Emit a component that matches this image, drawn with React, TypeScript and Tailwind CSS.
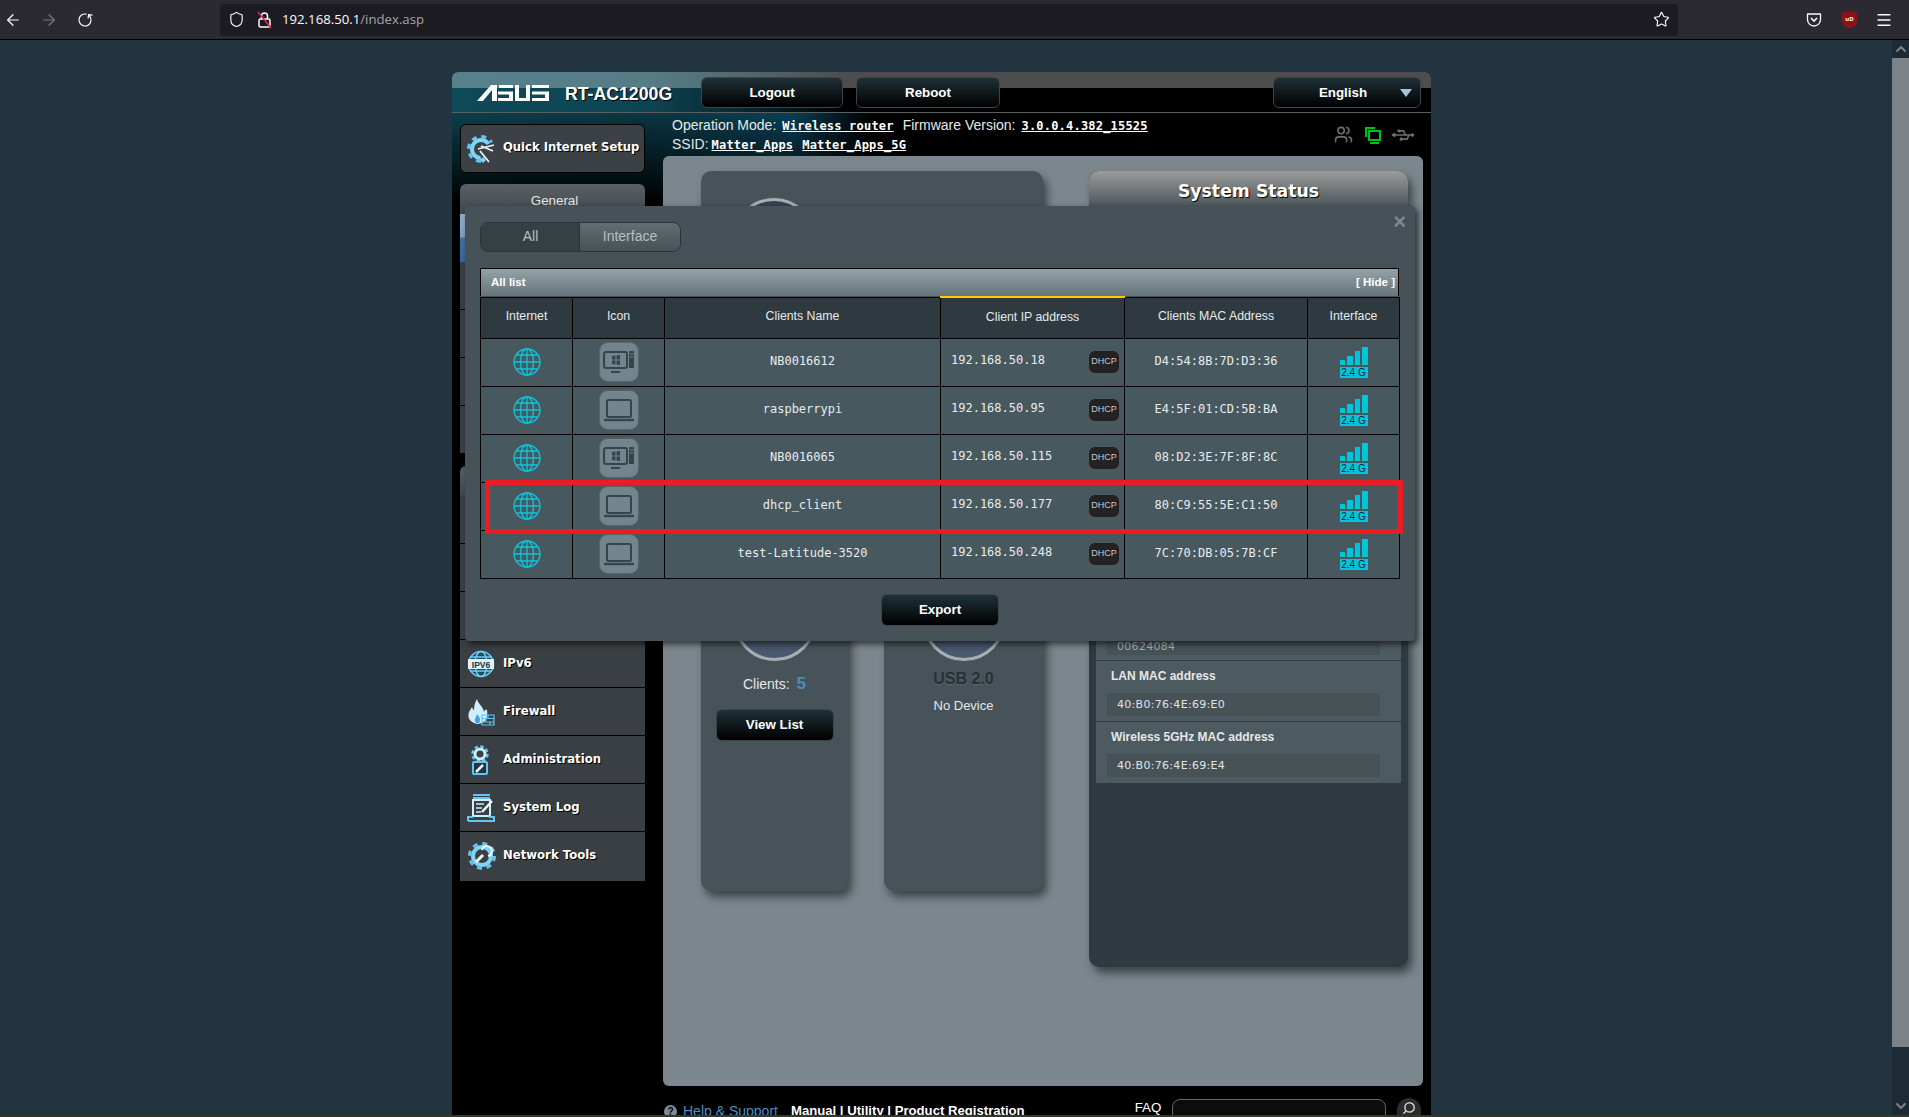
import { ArrowLeft, ArrowRight, ChevronDown, ChevronUp, Menu, RotateCw, Search, Shield, Star, Usb, Users } from "lucide-react"

const mono = "font-['DejaVu_Sans_Mono',monospace]"
const sideFont = "font-['DejaVu_Sans',sans-serif]"

const clients = [
  { name: "NB0016612", ip: "192.168.50.18", mac: "D4:54:8B:7D:D3:36", desktop: true },
  { name: "raspberrypi", ip: "192.168.50.95", mac: "E4:5F:01:CD:5B:BA", desktop: false },
  { name: "NB0016065", ip: "192.168.50.115", mac: "08:D2:3E:7F:8F:8C", desktop: true },
  { name: "dhcp_client", ip: "192.168.50.177", mac: "80:C9:55:5E:C1:50", desktop: false },
  { name: "test-Latitude-3520", ip: "192.168.50.248", mac: "7C:70:DB:05:7B:CF", desktop: false },
]

function AsusLogo() {
  return (
    <svg width="72" height="16" viewBox="0 0 72 16" fill="#fff">
      <path d="M0 16 L14 0 H20 L20 16 H15 V5 L6 16 Z" />
      <path d="M22 0 H36 V3 H22 Z M21 6.5 H36 V16 H21 V13 H32 V9.5 H21 Z" />
      <path d="M38 0 H42 V13 H49 V0 H53 V16 H38 Z" />
      <path d="M55 0 H72 V3 H55 Z M55 6.5 H72 V16 H55 V13 H68 V9.5 H55 Z" />
    </svg>
  )
}

function Gear({ children }: { children?: React.ReactNode }) {
  return (
    <svg width="30" height="30" viewBox="0 0 30 30" fill="none">
      <circle cx="15" cy="15" r="12.5" stroke="#62c6f0" strokeWidth="3" strokeDasharray="5 4.8" />
      <circle cx="15" cy="15" r="9" stroke="#7fd3f5" strokeWidth="4" />
      {children}
    </svg>
  )
}

function SetupIcon() {
  return (
    <Gear>
      <path d="M13 15 L30 6 V30 H16 Z" fill="#3b4144" />
      <path d="M12 15 L28 11 M15 12 L27 17 M14 17 L23 28" stroke="#e8f6fc" strokeWidth="1.8" />
      <path d="M17 23 L20 26 L17 29 L14 26 Z" fill="#7fd3f5" />
    </Gear>
  )
}

function Ipv6Icon() {
  return (
    <svg width="28" height="28" viewBox="0 0 28 28" fill="none" stroke="#6fcdf3" strokeWidth="1.5">
      <circle cx="14" cy="14" r="12.5" fill="#1f4a60" />
      <ellipse cx="14" cy="14" rx="6" ry="12.5" />
      <path d="M3 7 H25 M3 21 H25" />
      <rect x="1" y="9" width="26" height="10" fill="#dff3fb" stroke="none" />
      <text x="14" y="17.5" textAnchor="middle" fontSize="8.5" fontWeight="700" fill="#234" stroke="none" fontFamily="Liberation Sans">IPV6</text>
    </svg>
  )
}

function FirewallIcon() {
  return (
    <svg width="28" height="28" viewBox="0 0 28 28" fill="none">
      <path d="M10 1 C11 6 16 8 17 14 C18 11 19 11 20 12 C21 18 20 25 11 26 C3 25 0 20 2 14 C3 12 4 11 5 9 C6 11 6 12 7 12 C7 8 8 4 10 1 Z" fill="#cfeefb" />
      <path d="M9 25 C6 21 10 19 10 16 C13 19 14 22 12 25 Z" fill="#3ca6dc" />
      <path d="M15 17 H27 V27 H15 Z M15 20.5 H27 M15 24 H27 M21 17 V20.5 M19 20.5 V24 M23 24 V27" stroke="#62c6f0" strokeWidth="1.2" />
    </svg>
  )
}

function AdminIcon() {
  return (
    <svg width="26" height="30" viewBox="0 0 26 30" fill="none">
      <circle cx="13" cy="9" r="7.5" stroke="#62c6f0" strokeWidth="2.5" strokeDasharray="3.5 2.4" />
      <circle cx="13" cy="9" r="5" stroke="#cbeefb" strokeWidth="3" />
      <rect x="6" y="17" width="14" height="12" rx="1" stroke="#62c6f0" strokeWidth="2" fill="#1f3640" />
      <path d="M9 27 L16 20" stroke="#e8f6fc" strokeWidth="2.5" />
    </svg>
  )
}

function LogIcon() {
  return (
    <svg width="28" height="28" viewBox="0 0 28 28" fill="none">
      <path d="M6 1 H23 M6 4 H23" stroke="#62c6f0" strokeWidth="2" />
      <rect x="6" y="6" width="17" height="16" stroke="#cbeefb" strokeWidth="2" />
      <path d="M9 10 H17 M9 14 H15 M9 18 H14" stroke="#cbeefb" strokeWidth="1.6" />
      <path d="M15 18 L25 7" stroke="#f0fafe" strokeWidth="2.5" />
      <path d="M1 27 H27 V23 H22 M1 27 V23 H6" stroke="#62c6f0" strokeWidth="2" />
    </svg>
  )
}

function ToolsIcon() {
  return (
    <Gear>
      <path d="M9 21 L16 14" stroke="#f0fafe" strokeWidth="3" />
      <path d="M15 9 A5 5 0 1 1 21 15" stroke="#f0fafe" strokeWidth="2" />
    </Gear>
  )
}

function Globe() {
  return (
    <svg width="28" height="28" viewBox="0 0 28 28" fill="none" stroke="#10c4dc" strokeWidth="1.3">
      <circle cx="14" cy="14" r="13" />
      <ellipse cx="14" cy="14" rx="6.5" ry="13" />
      <path d="M14 1 V27 M1 14 H27 M3.5 7 H24.5 M3.5 21 H24.5" />
    </svg>
  )
}

function DeviceIcon({ desktop }: { desktop: boolean }) {
  return (
    <div className="flex h-[40px] w-[40px] items-center justify-center rounded-[9px] border border-[#56666d] bg-[#72848c]">
      {desktop ? (
        <svg width="32" height="24" viewBox="0 0 32 24" fill="none" stroke="#37444b" strokeWidth="2">
          <rect x="1" y="2" width="23" height="16" rx="2" />
          <path d="M8 22 H17" strokeWidth="2" />
          <rect x="26" y="1" width="5" height="17" fill="#37444b" stroke="none" />
          <path d="M26.5 4 H30.5 M26.5 7 H30.5" stroke="#72848c" strokeWidth="1" />
          <path d="M9 6 L17 5 V9.5 H9 Z M9 10.5 H17 V15 L9 14 Z" fill="#37444b" stroke="none" />
          <path d="M13 5 V15" stroke="#72848c" strokeWidth="1" />
        </svg>
      ) : (
        <svg width="32" height="24" viewBox="0 0 32 24" fill="none" stroke="#37444b" strokeWidth="2">
          <rect x="4" y="2" width="24" height="17" rx="1.5" />
          <path d="M1 22 H31" strokeWidth="2.4" />
        </svg>
      )}
    </div>
  )
}

function Signal() {
  return (
    <div className="flex w-[28px] flex-col gap-[2px]">
      <div className="flex h-[18px] items-end gap-[2px]">
        <div className="h-[5px] w-[5.5px] bg-[#00c6dc]" />
        <div className="h-[9px] w-[5.5px] bg-[#00c6dc]" />
        <div className="h-[14px] w-[5.5px] bg-[#00c6dc]" />
        <div className="h-[18px] w-[5.5px] bg-[#00c6dc]" />
      </div>
      <div className="h-[11px] whitespace-nowrap bg-[#00c6dc] text-center font-['Liberation_Sans',sans-serif] text-[10px] leading-[11px] text-[#06252c]">2.4 G</div>
    </div>
  )
}

function DarkButton({ label, className }: { label: string; className: string }) {
  return (
    <div className={`flex items-center justify-center rounded-[6px] border border-[#3b464c] bg-[linear-gradient(180deg,#1f3138_0%,#000_100%)] text-[13.33px] font-bold text-white ${className}`}>
      {label}
    </div>
  )
}

function SideRow({ icon, label }: { icon?: React.ReactNode; label?: string }) {
  return (
    <div className="flex h-[48px] items-center border-b border-black bg-[#3a3f43] pl-[7px] last:h-[50px] last:pb-[2px]">
      <div className="flex w-[36px] shrink-0 items-center justify-start">{icon}</div>
      <span className={`${sideFont} text-[11.7px] font-bold text-white [text-shadow:1px_1px_0_#000]`}>{label}</span>
    </div>
  )
}

function Ring() {
  return <div className="mx-auto h-[84px] w-[84px] rounded-full border-[3px] border-[#a7afb3] bg-[linear-gradient(180deg,#33404f_0%,#4a5b70_100%)]" />
}

function Browser() {
  return (
    <div className="flex h-[40px] shrink-0 items-center border-b border-black bg-[#2b2a33] text-[#fbfbfe]">
      <div className="flex w-[220px] items-center pl-[4px]">
        <ArrowLeft size={18} strokeWidth={1.6} />
        <ArrowRight size={18} strokeWidth={1.6} className="ml-[18px] text-[#77767c]" />
        <RotateCw size={16} strokeWidth={1.8} className="ml-[19px] -scale-x-100 rotate-[100deg]" />
      </div>
      <div className="flex h-[32px] w-[1458px] items-center rounded-[4px] bg-[#1c1b22] pr-[8px] font-['Open_Sans',sans-serif] text-[13.2px]">
        <Shield size={17} strokeWidth={1.6} className="ml-[8px]" />
        <svg width="16" height="18" viewBox="0 0 16 18" fill="none" stroke="#fbfbfe" strokeWidth="1.5" className="ml-[12px]">
          <rect x="2" y="8" width="11" height="8" rx="1.5" />
          <path d="M4.5 8 V5 A3 3 0 0 1 10.5 5 V8" />
          <path d="M1 1 L14 17" stroke="#e22850" />
        </svg>
        <span className="ml-[9px] pt-[1px]">192.168.50.1</span>
        <span className="pt-[1px] text-[#a5a4aa]">/index.asp</span>
        <Star size={17} strokeWidth={1.6} className="ml-auto" />
      </div>
      <div className="ml-auto flex items-center pr-[16px]">
        <svg width="16" height="16" viewBox="0 0 16 16" fill="none" stroke="#fbfbfe" strokeWidth="1.3">
          <path d="M1.5 2 H14.5 V7.5 A6.5 6.5 0 0 1 1.5 7.5 Z" strokeLinejoin="round" />
          <path d="M5 6 L8 9 L11 6" strokeWidth="1.6" />
        </svg>
        <div className="ml-[20px] flex h-[16px] w-[15px] items-center justify-center rounded-b-[7px] rounded-t-[2px] bg-[#8a1218] text-[6px] font-bold text-white">uD</div>
        <Menu size={18} strokeWidth={1.7} className="ml-[18px]" />
      </div>
    </div>
  )
}

function Scrollbar() {
  return (
    <div className="flex w-[17px] shrink-0 flex-col items-center bg-[#1e2b35] text-[#7b8389]">
      <ChevronUp size={16} strokeWidth={3} className="my-[1px]" />
      <div className="h-[989px] w-full bg-[#7b8389]" />
      <div className="flex-1" />
      <ChevronDown size={16} strokeWidth={3} className="mb-[1px]" />
    </div>
  )
}

function Header() {
  return (
    <div className="flex h-[41px] shrink-0 items-start border-b border-[#5a5f62] bg-[linear-gradient(180deg,rgba(255,255,255,0.3)_0,rgba(255,255,255,0.3)_16px,transparent_16px),linear-gradient(90deg,#0f4a58_0%,#0d4452_20%,#08262e_30%,#000_40%)] pl-[25px] pt-[5px]">
      <div className="mt-[8px]">
        <AsusLogo />
      </div>
      <div className="ml-[16px] mt-[4px] w-[136px] whitespace-nowrap text-[17.7px] font-bold text-white [text-shadow:1px_1px_0_#000]">RT-AC1200G</div>
      <DarkButton label="Logout" className="h-[31px] w-[142px]" />
      <DarkButton label="Reboot" className="ml-[13px] h-[31px] w-[144px]" />
      <div className="relative ml-[273px] flex h-[31px] w-[148px] items-center justify-center rounded-[6px] border border-[#3b464c] bg-[linear-gradient(180deg,#1f3138_0%,#000_100%)] pr-[8px] text-[13.33px] font-bold text-white">
        English
        <div className="absolute right-[8px] top-[11px] h-0 w-0 border-x-[6px] border-t-[8px] border-x-transparent border-t-[#a9c4d4]" />
      </div>
    </div>
  )
}

function Sidebar() {
  return (
    <div className="w-[185px] shrink-0 pt-[11px]">
      <div className="flex h-[49px] items-center rounded-[6px] border border-black bg-[#3b4144] pl-[5px]">
        <div className="w-[37px] shrink-0">
          <SetupIcon />
        </div>
        <span className={`${sideFont} whitespace-nowrap pb-[2px] text-[11.6px] font-bold text-white [text-shadow:1px_1px_0_#000]`}>Quick Internet Setup</span>
      </div>
      <div className="mt-[11px] flex h-[30px] items-center justify-center rounded-t-[6px] bg-[linear-gradient(180deg,#5a6164_0%,#41484b_100%)] pl-[4px] pt-[3px] text-[13.33px] text-[#e6e6e6]">
        General
      </div>
      <div className="h-[48px] bg-[linear-gradient(180deg,#93aec8_0%,#7f9fc0_48%,#41719f_50%,#38679a_100%)]" />
      <SideRow />
      <SideRow />
      <SideRow />
      <SideRow />
      <div className="mt-[12px] h-[30px] rounded-t-[6px] bg-[linear-gradient(180deg,#5a6164_0%,#41484b_100%)]" />
      <SideRow />
      <SideRow />
      <SideRow />
      <SideRow icon={<Ipv6Icon />} label="IPv6" />
      <SideRow icon={<FirewallIcon />} label="Firewall" />
      <SideRow icon={<AdminIcon />} label="Administration" />
      <SideRow icon={<LogIcon />} label="System Log" />
      <SideRow icon={<ToolsIcon />} label="Network Tools" />
    </div>
  )
}

function InfoBar() {
  const link = `${mono} text-[12px] font-bold text-white underline tracking-[0.2px]`
  return (
    <div className="flex h-[43px] shrink-0 justify-between pl-[9px] pr-[10px] text-[14px] text-[#e8e8e8]">
      <div className="pt-[3px] leading-[18px]">
        <div className="flex items-baseline gap-[6px]">
          <span>Operation Mode:</span>
          <span className={link}>Wireless router</span>
          <span className="ml-[3px]">Firmware Version:</span>
          <span className={link}>3.0.0.4.382_15525</span>
        </div>
        <div className="flex items-baseline gap-[3px]">
          <span>SSID:</span>
          <span className={link}>Matter_Apps</span>
          <span className={`${link} ml-[6px]`}>Matter_Apps_5G</span>
        </div>
      </div>
      <div className="flex items-center gap-[11px] py-[2px]">
        <Users size={19} className="text-[#6b6f72]" />
        <svg width="18" height="18" viewBox="0 0 18 18" fill="none" stroke="#00c020" strokeWidth="2">
          <path d="M11 2 H2 V11" />
          <rect x="5" y="5" width="11" height="9" />
          <path d="M6 17 H15" />
        </svg>
        <Usb size={20} className="rotate-[225deg] text-[#6b6f72]" />
      </div>
    </div>
  )
}

function StatusField({ label, value }: { label: string; value: string }) {
  return (
    <div className="mt-[5px] border-t border-[#2f3c43]">
      <div className="ml-[15px] pt-[8px] text-[12px] font-bold leading-[14px] text-[#e4e7e8]">{label}</div>
      <div className="ml-[11px] mr-[21px] mt-[10px] flex h-[23px] items-center bg-[#475257] pl-[10px] pt-[2px] font-['DejaVu_Sans',sans-serif] text-[11px] tracking-[0.3px] text-[#e0e3e4]">
        {value}
      </div>
    </div>
  )
}

function SystemStatus() {
  return (
    <div className="flex h-[796px] w-[319px] flex-col rounded-[10px] bg-[#2f3a40] shadow-[4px_6px_8px_rgba(0,0,0,0.5)]">
      <div className="flex h-[35px] shrink-0 items-center justify-center rounded-t-[10px] bg-[linear-gradient(180deg,#9b9b9b_0%,#4d575b_100%)] pt-[7px] font-['DejaVu_Sans',sans-serif] text-[17.3px] font-bold text-white [text-shadow:1px_1px_1px_#000]">
        System Status
      </div>
      <div className="mx-[7px] mt-[8px] flex h-[569px] flex-col justify-end bg-[#4d5a5f] pb-[6px]">
        <div className="ml-[11px] mr-[21px] flex h-[23px] items-center bg-[#475257] pl-[10px] pt-[8px] font-['DejaVu_Sans',sans-serif] text-[11px] tracking-[0.3px] text-[#aab2b5]">
          00624084
        </div>
        <StatusField label="LAN MAC address" value="40:B0:76:4E:69:E0" />
        <StatusField label="Wireless 5GHz MAC address" value="40:B0:76:4E:69:E4" />
      </div>
    </div>
  )
}

function Cards() {
  return (
    <div className="w-[342px] shrink-0">
      <div className="h-[230px] rounded-[10px] bg-[#475359] pt-[27px] shadow-[4px_6px_8px_rgba(0,0,0,0.5)]">
        <div className="ml-[31px] w-[84px]">
          <Ring />
        </div>
      </div>
      <div className="mt-[14px] flex gap-[36px]">
        <div className="h-[476px] w-[147px] rounded-[10px] bg-[#475359] pt-[162px] text-center shadow-[4px_6px_8px_rgba(0,0,0,0.5)]">
          <Ring />
          <div className="mt-[12px] flex items-center justify-center gap-[7px] text-[14px] leading-[22px] text-[#e4e7e8]">
            Clients:
            <span className="text-[17px] font-bold text-[#4a8dbd]">5</span>
          </div>
          <DarkButton label="View List" className="mx-auto mt-[14px] h-[32px] w-[118px]" />
        </div>
        <div className="h-[476px] w-[159px] rounded-[10px] bg-[#475359] pt-[162px] text-center shadow-[4px_6px_8px_rgba(0,0,0,0.5)]">
          <Ring />
          <div className="mt-[9px] text-[16px] font-bold leading-[18px] text-[#262f34] [text-shadow:0_1px_1px_#5c686e]">USB 2.0</div>
          <div className="mt-[10px] text-[13px] leading-[16px] text-[#e4e7e8]">No Device</div>
        </div>
      </div>
    </div>
  )
}

function Footer() {
  return (
    <div className="flex items-start pl-[1px] pt-[14px] text-[13.15px] leading-[20px]">
      <div className="mt-[5px] flex h-[13px] w-[13px] items-center justify-center rounded-full bg-[#7b8c94] text-[10px] font-bold text-black">?</div>
      <span className="ml-[6px] mt-[1px] text-[14px] text-[#4a90c0]">Help & Support</span>
      <span className="ml-[13px] mt-[1px] font-bold text-white">Manual | Utility | Product Registration</span>
      <span className="ml-[110px] mt-[-2px] text-[13.33px] text-white">FAQ</span>
      <div className="ml-[11px] mt-[-1px] h-[30px] w-[214px] rounded-[8px] border border-[#666] bg-[#0c0c0c]" />
      <div className="ml-[11px] mt-[-2px] flex h-[30px] w-[24px] items-start justify-center rounded-full bg-[#2c2c2c] pt-[3px]">
        <Search size={14} strokeWidth={2.6} className="-scale-x-100 text-[#c8ced1]" />
      </div>
    </div>
  )
}

function RouterPanel() {
  return (
    <div className="flex h-full w-[979px] flex-col overflow-hidden rounded-t-[6px] bg-black font-['Liberation_Sans',Arial,sans-serif]">
      <Header />
      <div className="flex flex-1 gap-[18px] bg-[linear-gradient(180deg,transparent_0,#000_90px),linear-gradient(90deg,#0b3f4c_0,#0a3541_200px,#0b3f55_340px,#000_420px)] pl-[8px]">
        <Sidebar />
        <div className="flex w-[760px] shrink-0 flex-col">
          <InfoBar />
          <div className="flex h-[930px] shrink-0 gap-[46px] rounded-[6px] bg-[#7b878d] pl-[38px] pt-[15px]">
            <Cards />
            <SystemStatus />
          </div>
          <Footer />
        </div>
      </div>
    </div>
  )
}

function ClientModal() {
  const th = "border border-black pb-[2px] text-center font-normal text-[#e5e9ea]"
  const td = "border border-black p-0 text-center"
  return (
    <div className="absolute left-[465px] top-[206px] h-[435px] w-[950px] rounded-[4px] bg-[#465158] pl-[15px] pt-[16px] font-['Liberation_Sans',Arial,sans-serif] shadow-[3px_3px_6px_rgba(0,0,0,0.6)]">
      <div className="absolute right-[9px] top-[6px] text-[22px] font-bold leading-[20px] text-[#7d8a90]">×</div>

      <div className="flex h-[30px] w-[201px] overflow-hidden rounded-[8px] border border-[#2b3338] text-[14px] text-[#b7bfc3]">
        <div className="flex w-[99px] items-center justify-center border-r border-[#2b3338] bg-[#363f44] pb-[1px] pl-[1px]">All</div>
        <div className="flex flex-1 items-center justify-center bg-[linear-gradient(180deg,#626d72_0%,#475257_100%)] pb-[1px]">Interface</div>
      </div>

      <div className="mt-[16px] flex h-[28px] w-[919px] items-center justify-between border border-b-0 border-black bg-[linear-gradient(180deg,#95a2a8_0%,#66757b_100%)] pl-[10px] pr-[3px] text-[11.5px] font-bold text-white">
        <span>All list</span>
        <span>[ Hide ]</span>
      </div>

      <table className="w-[919px] table-fixed border-collapse text-[12px]">
        <colgroup>
          <col className="w-[92px]" />
          <col className="w-[92px]" />
          <col className="w-[276px]" />
          <col className="w-[184px]" />
          <col className="w-[183px]" />
          <col className="w-[92px]" />
        </colgroup>
        <thead>
          <tr className="h-[41px] bg-[#2f3a40] text-[12.3px]">
            <th className={th}>Internet</th>
            <th className={th}>Icon</th>
            <th className={th}>Clients Name</th>
            <th className={`${th} border-t-2 border-t-[#ffcc00]`}>Client IP address</th>
            <th className={th}>Clients MAC Address</th>
            <th className={th}>Interface</th>
          </tr>
        </thead>
        <tbody className={`${mono} text-[#e8ecee]`}>
          {clients.map((c) => (
            <tr key={c.name} className="h-[48px] bg-[#47585f]">
              <td className={td}>
                <div className="flex justify-center">
                  <Globe />
                </div>
              </td>
              <td className={td}>
                <div className="flex justify-center">
                  <DeviceIcon desktop={c.desktop} />
                </div>
              </td>
              <td className={`${td} pb-[2px]`}>{c.name}</td>
              <td className={td}>
                <div className="flex items-center justify-between pl-[10px] pr-[5px]">
                  <span className="-mt-[4px]">{c.ip}</span>
                  <div className="flex h-[22px] w-[30px] items-center justify-center rounded-[6px] bg-[#222] font-['Liberation_Sans',sans-serif] text-[9px] text-[#c9c9c9]">DHCP</div>
                </div>
              </td>
              <td className={`${td} pb-[2px]`}>{c.mac}</td>
              <td className={td}>
                <div className="flex justify-center">
                  <Signal />
                </div>
              </td>
            </tr>
          ))}
        </tbody>
      </table>

      <DarkButton label="Export" className="ml-[401px] mt-[15px] h-[32px] w-[118px]" />

      <div className="absolute left-[20px] top-[274px] h-[54px] w-[918px] border-[5px] border-[#ed1c24]" />
    </div>
  )
}

export default function App() {
  return (
    <div className="relative flex h-[1117px] w-[1909px] flex-col overflow-hidden bg-[#233441]">
      <Browser />
      <div className="flex min-h-0 flex-1">
        <div className="min-h-0 flex-1 pl-[452px] pt-[32px]">
          <RouterPanel />
        </div>
        <Scrollbar />
      </div>
      <div className="h-[2px] shrink-0 bg-[#33382f]" />
      <ClientModal />
    </div>
  )
}
